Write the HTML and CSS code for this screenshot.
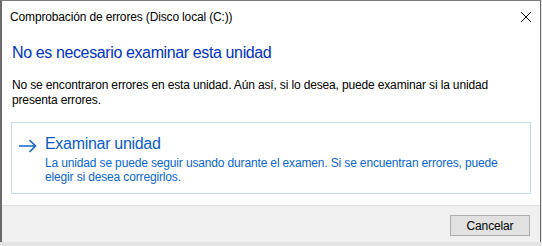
FILE: index.html
```html
<!DOCTYPE html>
<html lang="es">
<head>
<meta charset="utf-8">
<title>Comprobación de errores</title>
<link rel="stylesheet" href="styles.css">
</head>
<body>
<div class="window">
  <div class="titlebar">
    <span class="title">Comprobación de errores (Disco local (C:))</span>
    <svg class="close" width="12" height="12" viewBox="0 0 12 12"><path d="M1 1L11 11M11 1L1 11" stroke="#111" stroke-width="1" fill="none"/></svg>
  </div>
  <div class="content">
    <div class="heading">No es necesario examinar esta unidad</div>
    <p class="body">No se encontraron errores en esta unidad. Aún así, si lo desea, puede examinar si la unidad presenta errores.</p>
    <div class="cmdlink">
      <svg class="arrow" width="18" height="14" viewBox="0 0 18 14"><path d="M0 7H16.5M10.5 1L16.5 7L10.5 13" stroke="#1464c8" stroke-width="1.6" fill="none"/></svg>
      <div class="cmdtext">
        <div class="cmdtitle">Examinar unidad</div>
        <div class="cmddesc">La unidad se puede seguir usando durante el examen. Si se encuentran errores, puede elegir si desea corregirlos.</div>
      </div>
    </div>
  </div>
  <div class="footer">
    <button class="btn">Cancelar</button>
  </div>
</div>
</body>
</html>
```
FILE: styles.css
```css
html, body {
  margin: 0;
  padding: 0;
}
body {
  width: 542px;
  height: 246px;
  background: #e4e4e4;
  font-family: "Liberation Sans", Arial, sans-serif;
  letter-spacing: -0.15px;
  overflow: hidden;
}
.window {
  box-sizing: border-box;
  width: 541px;
  height: 242px;
  background: #fff;
  border-top: 1px solid #7a7a7a;
  border-left: 2px solid #6a6a6a;
  border-right: 1px solid #6a6a6a;
  display: flex;
  flex-direction: column;
}
.titlebar {
  height: 29px;
  display: flex;
  align-items: center;
  justify-content: space-between;
  padding: 0 8px 0 8px;
}
.title {
  font-size: 12px;
  color: #000;
  margin-top: 2px;
}
.close {
  margin-top: 2px;
  margin-right: 0;
}
.content {
  flex: 1;
  padding: 0 9px 0 9px;
}
.heading {
  margin-top: 13px;
  font-size: 16px;
  letter-spacing: -0.38px;
  line-height: 20px;
  color: #0033bb;
  padding-left: 1px;
}
.body {
  margin: 15px 0 0 0;
  font-size: 12px;
  line-height: 15px;
  color: #000;
  padding-left: 1px;
  width: 490px;
}
.cmdlink {
  margin-top: 14px;
  height: 72px;
  box-sizing: border-box;
  border: 1px solid #c5dcef;
  display: flex;
  align-items: flex-start;
  padding: 11px 8px 0 7px;
}
.arrow {
  flex: none;
  margin-top: 5px;
}
.cmdtext {
  margin-left: 8px;
  color: #0a66cc;
}
.cmdtitle {
  font-size: 16px;
  letter-spacing: -0.3px;
  line-height: 20px;
  color: #0a5cc4;
}
.cmddesc {
  margin-top: 2px;
  font-size: 12px;
  line-height: 14px;
  width: 474px;
}
.footer {
  height: 37px;
  box-sizing: border-box;
  background: #f0f0f0;
  border-top: 1px solid #dfdfdf;
  display: flex;
  align-items: flex-start;
  justify-content: flex-end;
  padding: 9px 10px 0 0;
}
.btn {
  width: 80px;
  height: 21px;
  box-sizing: border-box;
  border: 1px solid #adadad;
  background: #e1e1e1;
  font-family: "Liberation Sans", Arial, sans-serif;
  font-size: 12px;
  letter-spacing: -0.15px;
  color: #000;
  padding: 0;
}
```
